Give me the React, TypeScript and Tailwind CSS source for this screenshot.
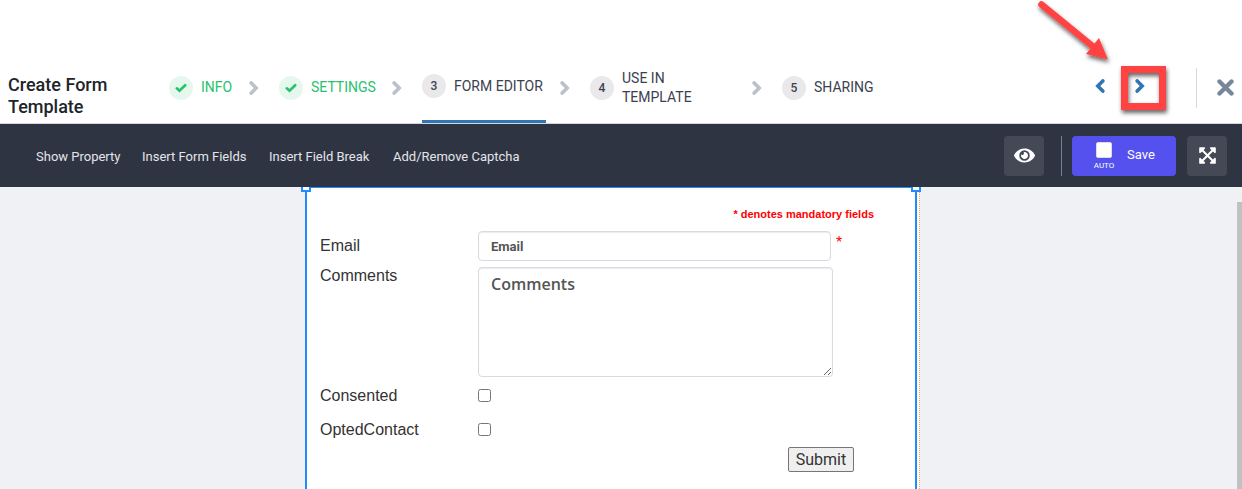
import { FaExpandArrowsAlt, FaEye } from "react-icons/fa";
import { clsx } from "clsx";

interface Step {
  label: string;
  state: "done" | "current" | "todo";
  labelClass: string;
}

const STEPS: Step[] = [
  { label: "INFO", state: "done", labelClass: "min-w-[34px]" },
  { label: "SETTINGS", state: "done", labelClass: "min-w-[67px]" },
  { label: "FORM EDITOR", state: "current", labelClass: "min-w-[92px]" },
  { label: "USE IN TEMPLATE", state: "todo", labelClass: "w-[116px] pr-10" },
  { label: "SHARING", state: "todo", labelClass: "min-w-[62px]" },
];

const TOOLBAR_LINKS = [
  { label: "Show Property", widthClass: "min-w-[86px]" },
  { label: "Insert Form Fields", widthClass: "min-w-[107px]" },
  { label: "Insert Field Break", widthClass: "min-w-[104px]" },
  { label: "Add/Remove Captcha", widthClass: "min-w-[127px]" },
];

function Chevron({ className }: { className?: string }) {
  return (
    <svg
      viewBox="0 0 10 14"
      className={clsx("h-3.5 w-2.5 shrink-0", className)}
      fill="none"
      stroke="currentColor"
      strokeWidth="3.6"
      strokeLinecap="round"
      strokeLinejoin="miter"
      aria-hidden="true"
    >
      <path d="M2.2 1.900L7.2 7L2.2 12.100" />
    </svg>
  );
}

function StepItem({ step, number }: { step: Step; number: number }) {
  const done = step.state === "done";
  const current = step.state === "current";
  return (
    <a
      href={`#step-${number}`}
      aria-current={current ? "step" : undefined}
      className={clsx(
        "flex h-[71px] items-center gap-2",
        current && "border-b-3 border-[#3276b1]",
        done ? "text-[#27c26c]" : "text-[#3c4150]",
      )}
    >
      <span
        className={clsx(
          "flex size-6 shrink-0 items-center justify-center rounded-full text-xs font-medium",
          done ? "bg-[#e6f8ee]" : "bg-[#e9e9eb]",
        )}
      >
        {done ? (
          <svg
            viewBox="0 0 12 10"
            className="h-2.5 w-3"
            fill="none"
            stroke="currentColor"
            strokeWidth="2.6"
            strokeLinecap="round"
            aria-hidden="true"
          >
            <path d="M1.8 5.3L4.5 7.8L10.2 2.2" />
          </svg>
        ) : (
          number
        )}
      </span>
      <span className={clsx("text-sm leading-[19px]", step.labelClass)}>
        {step.label}
      </span>
    </a>
  );
}

function Header() {
  return (
    <header className="flex items-start border-b border-[#d5d6dc] pt-[52px]">
      <h1 className="w-[169px] shrink-0 pt-[22px] pr-10 pl-2 text-lg leading-[22px] font-medium text-[#212529]">
        Create Form Template
      </h1>
      <nav aria-label="Steps" className="flex flex-1 items-center">
        {STEPS.map((step, i) => (
          <div key={step.label} className="flex items-center">
            {i > 0 && <Chevron className="mr-5 ml-3.5 text-[#bac2cc]" />}
            <StepItem step={step} number={i + 1} />
          </div>
        ))}
      </nav>
      <div className="flex items-center pt-4 pr-2">
        <div className="relative mr-[51px] flex gap-[30px] pb-1 text-[#3276b1]">
          <button type="button" aria-label="Previous step">
            <Chevron className="rotate-180" />
          </button>
          <button type="button" aria-label="Next step">
            <Chevron />
          </button>
          <Callout />
        </div>
        <div className="flex h-10 items-center border-l border-[#d5d8de] pb-0.5 pl-5">
          <button type="button" aria-label="Close" className="text-[#77879b]">
            <svg
              viewBox="0 0 17 17"
              className="size-[17px]"
              fill="none"
              stroke="currentColor"
              strokeWidth="4.4"
              strokeLinecap="round"
              aria-hidden="true"
            >
              <path d="M2.5 2.5L14.5 14.5M14.5 2.5L2.5 14.5" />
            </svg>
          </button>
        </div>
      </div>
    </header>
  );
}

// Red frame and arrow that point at the next button
function Callout() {
  return (
    <svg
      viewBox="0 0 140 122"
      className="pointer-events-none absolute -top-[81px] -left-[61px] h-[122px] w-[140px] max-w-none"
      aria-hidden="true"
    >
      <defs>
        <filter id="callout-shadow" x="-20%" y="-20%" width="150%" height="150%">
          <feDropShadow dx="1" dy="3" stdDeviation="2" floodColor="#000" floodOpacity="0.6" />
        </filter>
      </defs>
      <g filter="url(#callout-shadow)">
        <path d="M7.5 6.5L62 51" stroke="#ff4343" strokeWidth="6.5" strokeLinecap="round" />
        <path d="M74 61.500L65 40L52 56Z" fill="#ff4343" />
        <rect x="90.5" y="71.5" width="38" height="37" fill="none" stroke="#ff4343" strokeWidth="7" />
      </g>
    </svg>
  );
}

function Toolbar() {
  return (
    <div className="flex h-[63px] items-center bg-[#2f3443] pr-[15px] pl-9 text-[13px] text-[#e4e5e8]">
      <div className="flex flex-1 gap-5 pt-0.5">
        {TOOLBAR_LINKS.map(({ label, widthClass }) => (
          <button key={label} type="button" className={clsx("text-left", widthClass)}>
            {label}
          </button>
        ))}
      </div>
      <button
        type="button"
        aria-label="Preview"
        className="flex size-10 items-center justify-center rounded bg-[#444955] text-white"
      >
        <FaEye className="size-[21px]" />
      </button>
      <div className="mr-2.5 ml-[17px] h-10 border-l border-[#77829a]" />
      <div className="flex h-10 w-[104px] items-center rounded bg-[#5551ee] pl-5 text-white">
        <label className="flex w-6 flex-col items-center gap-1 text-[8px] leading-2">
          <input
            type="checkbox"
            className="size-4 appearance-none rounded-xs border border-[#dcdce6] bg-white checked:bg-[#27c26c]"
          />
          AUTO
        </label>
        <button type="button" className="pb-0.5 pl-[11px]">
          Save
        </button>
      </div>
      <button
        type="button"
        aria-label="Full screen"
        className="ml-[11px] flex size-10 items-center justify-center rounded bg-[#444955] text-white"
      >
        <FaExpandArrowsAlt className="size-[19px]" />
      </button>
    </div>
  );
}

function CheckRow({ id, label }: { id: string; label: string }) {
  return (
    <div className="flex h-[34px] items-center">
      <label htmlFor={id} className="w-[158px]">
        {label}
      </label>
      <input id={id} type="checkbox" className="mb-0.5 size-[13px]" />
    </div>
  );
}

function ResizeHandle({ className }: { className: string }) {
  return (
    <span
      className={clsx(
        "absolute top-0 h-[5px] w-2.5 border-2 border-t-0 border-[#1f8bff] bg-white",
        className,
      )}
    />
  );
}

function FormPanel() {
  return (
    <div className="mx-auto w-[615px] border-r border-dotted border-[#f5a623] bg-white pr-0.5">
      <form className="relative h-full border-x-2 border-t border-[#1f8bff] pt-[18px] pr-[41px] pl-[13px] font-['Liberation_Sans',Arial,sans-serif] text-base text-[#333333]">
        <ResizeHandle className="-left-1.5 -mt-px" />
        <ResizeHandle className="-right-1.5 -mt-px" />
        <p className="mb-[9px] text-right text-[11px] leading-4 font-bold text-[#ff0000]">
          * denotes mandatory fields
        </p>
        <div className="mb-1.5 flex">
          <label htmlFor="email" className="w-[158px] leading-[30px]">
            Email
          </label>
          <input
            id="email"
            type="text"
            placeholder="Email"
            className="h-[30px] w-[353px] rounded border border-[#d9dae2] px-3 font-[Roboto,sans-serif] text-[13px] font-bold shadow-[inset_0_1px_1px_rgba(0,0,0,0.08)] placeholder:text-[#555555]"
          />
          <span className="ml-[5px] text-[#ff0000]">*</span>
        </div>
        <div className="mb-0.5 flex">
          <label htmlFor="comments" className="w-[158px] leading-[18px]">
            Comments
          </label>
          <textarea
            id="comments"
            placeholder="Comments"
            className="block h-[110px] w-[355px] resize rounded border border-[#d9dae2] px-3 py-1 font-['Open_Sans',sans-serif] text-base font-semibold shadow-[inset_0_1px_1px_rgba(0,0,0,0.08)] placeholder:text-[#555555]"
          />
        </div>
        <CheckRow id="consented" label="Consented" />
        <CheckRow id="opted-contact" label="OptedContact" />
        <div className="flex justify-end pr-5">
          <button
            type="button"
            className="h-[25px] w-[66px] rounded-xs border border-[#767676] bg-[#efefef] font-[Roboto,sans-serif] leading-[22px]"
          >
            Submit
          </button>
        </div>
      </form>
    </div>
  );
}

export default function App() {
  return (
    <div className="flex min-h-screen flex-col bg-white font-[Roboto,sans-serif]">
      <Header />
      <Toolbar />
      <main className="flex flex-1 bg-[#f0f1f5]">
        <div className="flex flex-1 pr-3">
          <FormPanel />
        </div>
        <div className="flex w-[5px] flex-col bg-[#f1f1f1] pt-[15px]">
          <div className="flex-1 bg-[#c1c1c1]" />
        </div>
      </main>
    </div>
  );
}
